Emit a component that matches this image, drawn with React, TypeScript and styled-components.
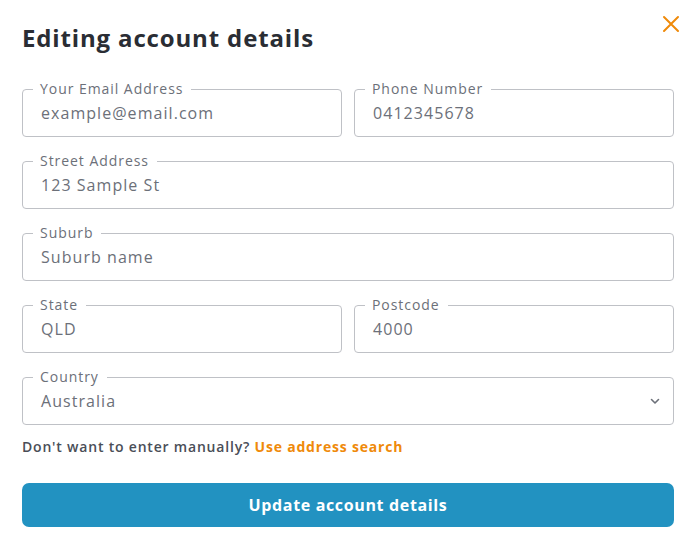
import React from "react";
import styled, { createGlobalStyle } from "styled-components";

const Global = createGlobalStyle`
  html, body { margin: 0; padding: 0; background: #ffffff; }
  body { font-family: "Open Sans", "Liberation Sans", sans-serif; }
  * { box-sizing: border-box; }
`;

const Modal = styled.div`
  width: 696px;
  height: 550px;
  background: #fff;
  padding: 23px 22px 0 22px;
  position: relative;
`;

const Header = styled.div`
  display: flex;
  align-items: center;
  justify-content: space-between;
  height: 30px;
`;

const Title = styled.h2`
  margin: 0;
  font-size: 24px;
  line-height: 30px;
  font-weight: 700;
  color: #2a2d34;
  letter-spacing: 0.85px;
`;

const Close = styled.button`
  border: none;
  background: none;
  padding: 0;
  margin: -28px -9px 0 0;
  width: 24px;
  height: 24px;
  display: flex;
  align-items: center;
  justify-content: center;
  cursor: pointer;
`;

const Form = styled.form`
  margin-top: 36px;
  display: flex;
  flex-direction: column;
  gap: 24px;
`;

const Row = styled.div<{ $cols: number }>`
  display: grid;
  grid-template-columns: repeat(${(p) => p.$cols}, 1fr);
  gap: 12px;
`;

const Box = styled.label`
  position: relative;
  display: flex;
  align-items: center;
  height: 48px;
  border: 1px solid #bfc1c6;
  border-radius: 4px;
  padding: 0 18px;
`;

const Legend = styled.span`
  position: absolute;
  top: -9px;
  left: 10px;
  padding: 0 8px 0 7px;
  background: #fff;
  font-size: 14px;
  line-height: 16px;
  font-weight: 500;
  color: #6c7079;
  letter-spacing: 0.95px;
`;

const Value = styled.span`
  flex: 1;
  font-size: 16px;
  color: #6c7079;
  font-weight: 500;
  letter-spacing: 1.05px;
`;

const Chevron = styled.svg`
  width: 12px;
  height: 12px;
  margin-right: -6px;
`;

const Hint = styled.p`
  margin: 12px 0 0 0;
  font-size: 14px;
  line-height: 20px;
  font-weight: 600;
  color: #4a4e57;
  letter-spacing: 0.8px;
`;

const Link = styled.a`
  color: #ef8a0a;
  font-weight: 700;
  text-decoration: none;
`;

const Submit = styled.button`
  margin-top: 26px;
  width: 100%;
  height: 44px;
  border: none;
  border-radius: 7px;
  background: #2292c1;
  color: #fff;
  font-family: inherit;
  font-size: 16px;
  font-weight: 700;
  letter-spacing: 0.65px;
  cursor: pointer;
`;

function Field({ label, value, select }: { label: string; value: string; select?: boolean }) {
  return (
    <Box>
      <Legend>{label}</Legend>
      <Value>{value}</Value>
      {select && (
        <Chevron viewBox="0 0 12 12" fill="none">
          <path d="M2.5 4.5 L6 8 L9.5 4.5" stroke="#6c7079" strokeWidth="1.6" strokeLinecap="round" strokeLinejoin="round" />
        </Chevron>
      )}
    </Box>
  );
}

export default function App() {
  return (
    <>
      <Global />
      <Modal>
        <Header>
          <Title>Editing account details</Title>
          <Close aria-label="Close">
            <svg width="18" height="18" viewBox="0 0 18 18">
              <path d="M2 2 L16 16 M16 2 L2 16" stroke="#ef8a0a" strokeWidth="2" strokeLinecap="round" />
            </svg>
          </Close>
        </Header>
        <Form>
          <Row $cols={2}>
            <Field label="Your Email Address" value="example@email.com" />
            <Field label="Phone Number" value="0412345678" />
          </Row>
          <Row $cols={1}>
            <Field label="Street Address" value="123 Sample St" />
          </Row>
          <Row $cols={1}>
            <Field label="Suburb" value="Suburb name" />
          </Row>
          <Row $cols={2}>
            <Field label="State" value="QLD" />
            <Field label="Postcode" value="4000" />
          </Row>
          <Row $cols={1}>
            <Field label="Country" value="Australia" select />
          </Row>
        </Form>
        <Hint>
          Don't want to enter manually? <Link href="#">Use address search</Link>
        </Hint>
        <Submit type="button">Update account details</Submit>
      </Modal>
    </>
  );
}
